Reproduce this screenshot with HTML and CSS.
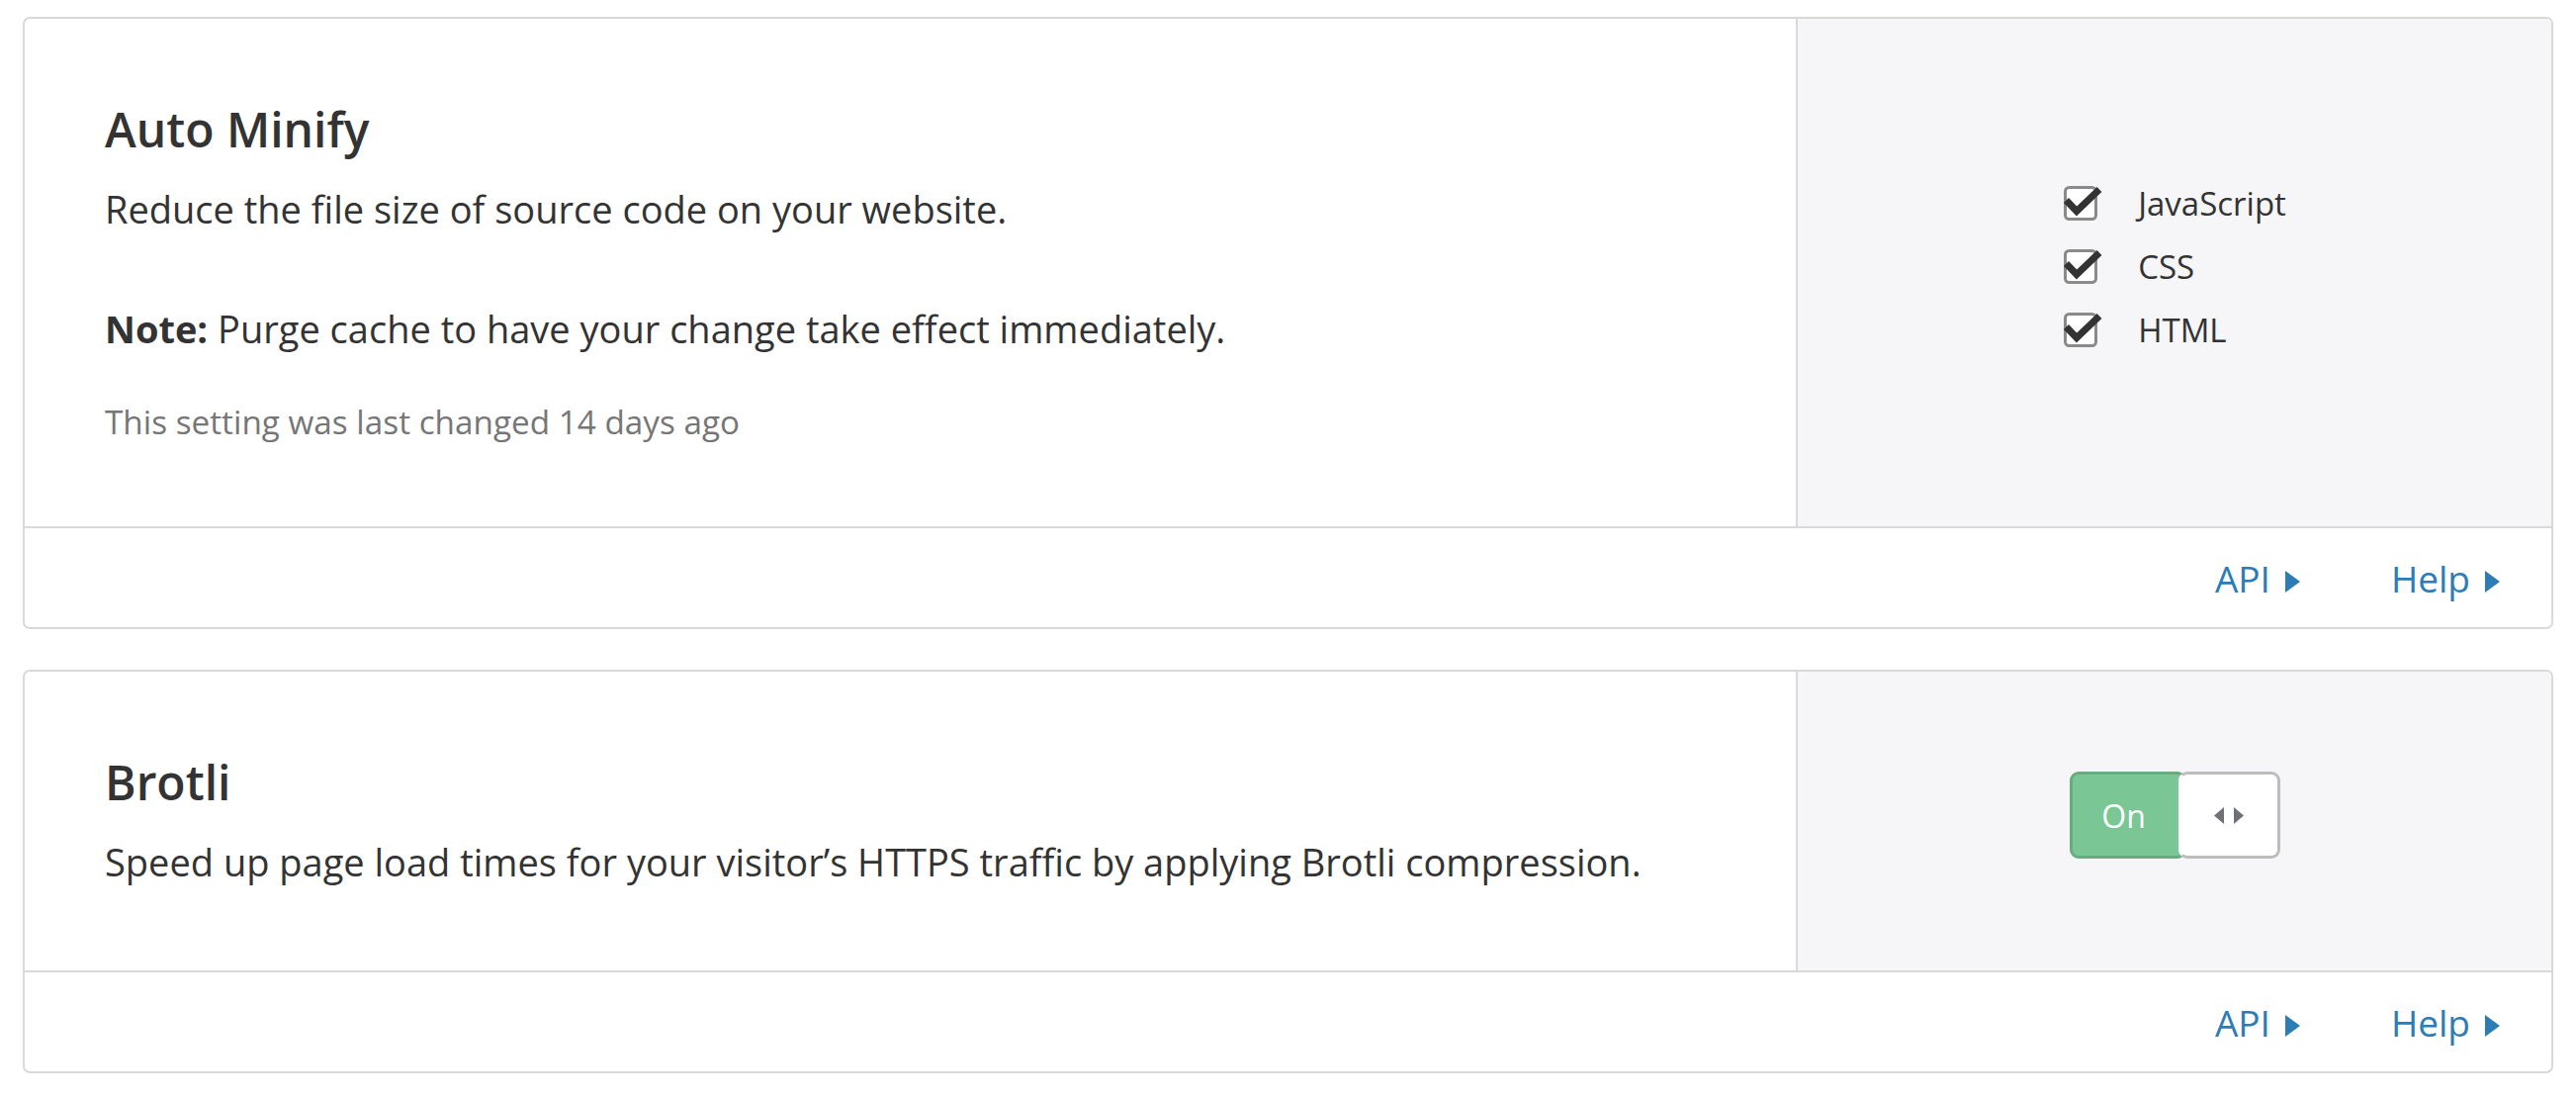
FILE: index.html
```html
<!DOCTYPE html>
<html lang="en">
<head>
<meta charset="utf-8">
<title>Speed settings</title>
<link rel="stylesheet" href="styles.css">
</head>
<body>
<main class="page">
  <section class="card">
    <div class="card-body">
      <div class="card-text">
        <h3 class="card-title">Auto Minify</h3>
        <p class="card-desc">Reduce the file size of source code on your website.</p>
        <p class="card-desc card-note"><strong>Note:</strong> Purge cache to have your change take effect immediately.</p>
        <p class="card-meta">This setting was last changed 14 days ago</p>
      </div>
      <div class="card-control card-control-checks">
        <div class="check-list">
          <label class="check-row">
            <svg class="check-box" width="40" height="38" viewBox="0 0 40 38" aria-hidden="true">
              <rect x="2.5" y="3.5" width="31" height="32" rx="4" fill="#fff" stroke="#8a8a8a" stroke-width="3"/>
              <path d="M3.5 16.5 L14 27.5 L37 5.5" fill="none" stroke="#333" stroke-width="7" stroke-linejoin="miter"/>
            </svg>
            <span class="check-label">JavaScript</span>
          </label>
          <label class="check-row">
            <svg class="check-box" width="40" height="38" viewBox="0 0 40 38" aria-hidden="true">
              <rect x="2.5" y="3.5" width="31" height="32" rx="4" fill="#fff" stroke="#8a8a8a" stroke-width="3"/>
              <path d="M3.5 16.5 L14 27.5 L37 5.5" fill="none" stroke="#333" stroke-width="7" stroke-linejoin="miter"/>
            </svg>
            <span class="check-label">CSS</span>
          </label>
          <label class="check-row">
            <svg class="check-box" width="40" height="38" viewBox="0 0 40 38" aria-hidden="true">
              <rect x="2.5" y="3.5" width="31" height="32" rx="4" fill="#fff" stroke="#8a8a8a" stroke-width="3"/>
              <path d="M3.5 16.5 L14 27.5 L37 5.5" fill="none" stroke="#333" stroke-width="7" stroke-linejoin="miter"/>
            </svg>
            <span class="check-label">HTML</span>
          </label>
        </div>
      </div>
    </div>
    <footer class="card-footer">
      <a class="card-link" href="#">API<svg class="caret" width="15" height="22" viewBox="0 0 15 22" aria-hidden="true"><path d="M0 0 L15 11 L0 22 Z" fill="#2c7cb5"/></svg></a>
      <a class="card-link" href="#">Help<svg class="caret" width="15" height="22" viewBox="0 0 15 22" aria-hidden="true"><path d="M0 0 L15 11 L0 22 Z" fill="#2c7cb5"/></svg></a>
    </footer>
  </section>

  <section class="card">
    <div class="card-body">
      <div class="card-text">
        <h3 class="card-title">Brotli</h3>
        <p class="card-desc">Speed up page load times for your visitor’s HTTPS traffic by applying Brotli compression.</p>
      </div>
      <div class="card-control card-control-toggle">
        <div class="toggle">
          <span class="toggle-on">On</span>
          <span class="toggle-knob">
            <svg width="30" height="17" viewBox="0 0 30 17" aria-hidden="true">
              <path d="M0 8.5 L10 0 L10 17 Z" fill="#6e7277"/>
              <path d="M20 0 L30 8.5 L20 17 Z" fill="#6e7277"/>
            </svg>
          </span>
        </div>
      </div>
    </div>
    <footer class="card-footer">
      <a class="card-link" href="#">API<svg class="caret" width="15" height="22" viewBox="0 0 15 22" aria-hidden="true"><path d="M0 0 L15 11 L0 22 Z" fill="#2c7cb5"/></svg></a>
      <a class="card-link" href="#">Help<svg class="caret" width="15" height="22" viewBox="0 0 15 22" aria-hidden="true"><path d="M0 0 L15 11 L0 22 Z" fill="#2c7cb5"/></svg></a>
    </footer>
  </section>
</main>
</body>
</html>
```

FILE: styles.css
```css
html, body {
  margin: 0;
  padding: 0;
  background: #ffffff;
}

body {
  font-family: "Open Sans", "Noto Sans", sans-serif;
  color: #333333;
}

.page {
  display: flex;
  flex-direction: column;
  gap: 41px;
  padding: 17px 23px 0 23px;
}

.card {
  border: 2px solid #d9d9d9;
  border-radius: 7px;
  background: #ffffff;
  overflow: hidden;
}

.card-body {
  display: flex;
  border-bottom: 2px solid #d9d9d9;
}

.card-text {
  flex: 1 1 auto;
  padding: 83px 81px 84px 81px;
  display: flex;
  flex-direction: column;
  justify-content: center;
}

.card-title {
  margin: 0 0 25px 0;
  font-size: 48px;
  line-height: 58px;
  font-weight: 600;
  color: #333333;
}

.card-desc {
  margin: 0;
  font-size: 38px;
  line-height: 52px;
  color: #333333;
}

.card-note {
  margin-top: 69px;
}

.card-note strong {
  font-weight: 700;
}

.card-meta {
  margin: 47px 0 0 0;
  font-size: 33.3px;
  line-height: 43px;
  color: #767676;
}

.card-control {
  flex: 0 0 764px;
  box-sizing: border-box;
  border-left: 2px solid #d9d9d9;
  background: #f6f6f8;
  display: flex;
  align-items: center;
  justify-content: center;
}

.card-control-checks {
  padding-bottom: 13px;
}

.card-control-toggle {
  padding-bottom: 12px;
}

.check-list {
  display: flex;
  flex-direction: column;
}

.check-row {
  display: flex;
  align-items: center;
  height: 64px;
  gap: 36px;
}

.check-box {
  display: block;
  flex: 0 0 auto;
}

.check-label {
  font-size: 33px;
  color: #333333;
}

.toggle {
  display: flex;
  height: 88px;
}

.toggle-on {
  box-sizing: border-box;
  width: 118px;
  height: 88px;
  padding-right: 8px;
  background: #7ac795;
  border: 3px solid #69ab81;
  border-radius: 9px;
  color: #ffffff;
  font-size: 32px;
  display: flex;
  align-items: center;
  justify-content: center;
}

.toggle-knob {
  box-sizing: border-box;
  width: 103px;
  height: 88px;
  margin-left: -8px;
  background: #ffffff;
  border: 3px solid #bdbdbd;
  border-left-color: #ffffff;
  border-radius: 9px;
  display: flex;
  align-items: center;
  justify-content: center;
}

.toggle-knob svg {
  display: block;
}

.card-footer {
  height: 100px;
  display: flex;
  align-items: center;
  justify-content: flex-end;
  gap: 92px;
  padding: 0 52px 0 0;
  box-sizing: border-box;
}

.card-link {
  display: inline-flex;
  align-items: center;
  gap: 15px;
  font-size: 37px;
  color: #2c7cb5;
  text-decoration: none;
}

.caret {
  display: block;
  margin-top: 7px;
}
```
